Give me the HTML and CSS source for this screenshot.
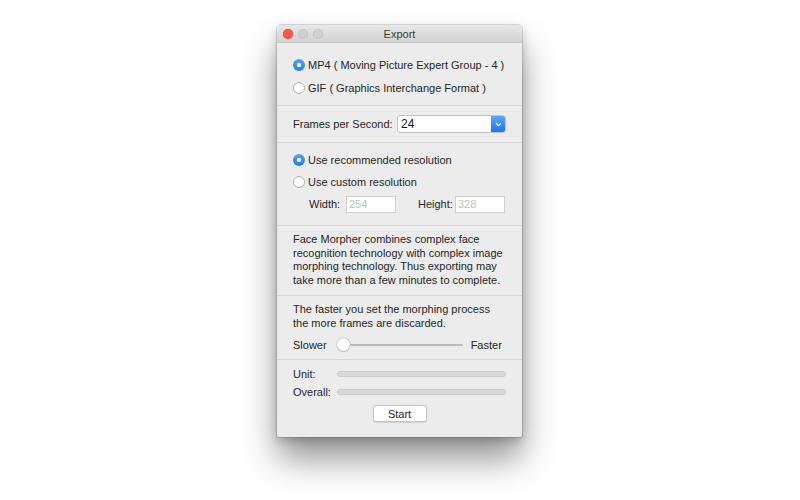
FILE: index.html
```html
<!DOCTYPE html>
<html>
<head>
<meta charset="utf-8">
<title>Export</title>
<link rel="stylesheet" href="styles.css">
</head>
<body>
<div class="window">
  <div class="titlebar">
    <div class="lights">
      <span class="light close"></span>
      <span class="light"></span>
      <span class="light"></span>
    </div>
    <div class="title">Export</div>
  </div>

  <div class="section format">
    <label class="radio-row"><span class="radio on"></span>MP4 ( Moving Picture Expert Group - 4 )</label>
    <label class="radio-row"><span class="radio"></span>GIF ( Graphics Interchange Format )</label>
  </div>

  <div class="section fps">
    <span class="fps-label">Frames per Second:</span>
    <div class="select">
      <span class="select-value">24</span>
      <span class="select-btn">
        <svg width="7" height="5" viewBox="0 0 7 5"><path d="M1 1.2 L3.5 3.6 L6 1.2" fill="none" stroke="#fff" stroke-width="1.2"/></svg>
      </span>
    </div>
  </div>

  <div class="section resolution">
    <label class="radio-row"><span class="radio on"></span>Use recommended resolution</label>
    <label class="radio-row"><span class="radio"></span>Use custom resolution</label>
    <div class="size-row">
      <span class="size-label">Width:</span>
      <span class="field">254</span>
      <span class="size-label height">Height:</span>
      <span class="field">328</span>
    </div>
  </div>

  <div class="section note">
    <p>Face Morpher combines complex face recognition technology with complex image morphing technology. Thus exporting may take more than a few minutes to complete.</p>
  </div>

  <div class="section speed">
    <p>The faster you set the morphing process<br>the more frames are discarded.</p>
    <div class="slider-row">
      <span>Slower</span>
      <div class="slider">
        <span class="track"></span>
        <span class="thumb"></span>
      </div>
      <span>Faster</span>
    </div>
  </div>

  <div class="section progress">
    <div class="progress-row">
      <span class="progress-label">Unit:</span>
      <span class="bar"></span>
    </div>
    <div class="progress-row">
      <span class="progress-label">Overall:</span>
      <span class="bar"></span>
    </div>
    <div class="actions">
      <button class="btn">Start</button>
    </div>
  </div>
</div>
</body>
</html>
```

FILE: styles.css
```css
html, body {
  margin: 0;
  padding: 0;
  background: #ffffff;
}

body {
  min-height: 100vh;
  padding-top: 25px;
  box-sizing: border-box;
  font-family: "Liberation Sans", Arial, sans-serif;
  font-size: 11px;
  color: #262626;
}

.window {
  width: 245px;
  margin: 0 0 0 277px;
  background: #ececec;
  border-radius: 4px 4px 2px 2px;
  box-shadow: 0 0 0 1px rgba(0, 0, 0, 0.12), 0 4px 10px rgba(0, 0, 0, 0.18), 0 22px 34px rgba(0, 0, 0, 0.42);
  overflow: hidden;
}

/* title bar */
.titlebar {
  position: relative;
  height: 17px;
  background: linear-gradient(#e8e8e8, #d3d3d3);
  border-bottom: 1px solid #c4c4c4;
  display: flex;
  align-items: center;
  justify-content: center;
}

.lights {
  position: absolute;
  left: 6px;
  top: 4px;
  display: flex;
  gap: 5px;
}

.light {
  width: 10px;
  height: 10px;
  border-radius: 50%;
  background: #d0d0d0;
  box-shadow: inset 0 0 0 0.5px #bdbdbd;
}

.light.close {
  background: #fc5753;
  box-shadow: inset 0 0 0 0.5px #df3d37;
}

.title {
  font-size: 11px;
  color: #3a3a3a;
}

/* sections */
.section {
  border-bottom: 1px solid #d6d6d6;
  padding: 0 16px;
}

.section:last-child {
  border-bottom: none;
}

.radio-row {
  display: flex;
  align-items: center;
  gap: 3px;
  height: 22px;
}

.radio {
  width: 12px;
  height: 12px;
  box-sizing: border-box;
  border-radius: 50%;
  background: #ffffff;
  border: 1px solid #b4b4b4;
  flex: none;
}

.radio.on {
  border: none;
  background: radial-gradient(circle, #ffffff 0 2px, transparent 2.4px), linear-gradient(#4fa3fb, #1a7ef5);
}

.format {
  padding-top: 10px;
  padding-bottom: 6px;
}

.format .radio-row {
  height: 23px;
}

/* frames per second */
.fps {
  display: flex;
  align-items: center;
  height: 36px;
}

.fps-label {
  width: 104px;
}

.select {
  width: 109px;
  height: 18px;
  box-sizing: border-box;
  background: #ffffff;
  border: 1px solid #c3c3c3;
  border-radius: 3px;
  display: flex;
  align-items: center;
  overflow: hidden;
}

.select-value {
  flex: 1;
  padding-left: 3px;
  font-size: 12px;
  color: #111;
}

.select-btn {
  width: 15px;
  height: 18px;
  margin-right: -1px;
  background: linear-gradient(#5fa9fa, #1a74f0);
  display: flex;
  align-items: center;
  justify-content: center;
}

/* resolution */
.resolution {
  padding-top: 6px;
  padding-bottom: 10px;
}

.size-row {
  display: flex;
  align-items: center;
  height: 22px;
  padding-left: 16px;
}

.size-label {
  width: 37px;
}

.size-label.height {
  width: 37px;
  margin-left: 22px;
}

.field {
  width: 50px;
  height: 17px;
  box-sizing: border-box;
  background: #ffffff;
  border: 1px solid #d0d0d0;
  color: #bdbdbd;
  padding-left: 2px;
  line-height: 15px;
}

/* note */
.note p,
.speed p {
  margin: 0;
  line-height: 13.7px;
}

.note {
  padding-top: 7px;
  padding-bottom: 7px;
}

/* speed slider */
.speed {
  padding-top: 7px;
  padding-bottom: 3px;
}

.slider-row {
  display: flex;
  align-items: center;
  height: 22px;
  margin-top: 4px;
}

.slider {
  position: relative;
  width: 126px;
  height: 14px;
  margin: 0 8px 0 10px;
}

.track {
  position: absolute;
  left: 4px;
  right: 0;
  top: 6px;
  height: 2px;
  background: #bcbcbc;
  border-radius: 1px;
}

.thumb {
  position: absolute;
  left: 0;
  top: 0;
  width: 13px;
  height: 13px;
  border-radius: 50%;
  background: #ffffff;
  box-shadow: 0 0 0 0.5px #b0b0b0, 0 1px 1px rgba(0, 0, 0, 0.2);
}

/* progress */
.progress {
  padding-top: 5px;
  padding-bottom: 15px;
}

.progress-row {
  display: flex;
  align-items: center;
  height: 18px;
}

.progress-label {
  width: 44px;
}

.bar {
  flex: 1;
  height: 4px;
  background: #d9d9d9;
  border: 1px solid #cacaca;
  border-radius: 3px;
}

.actions {
  display: flex;
  justify-content: center;
  margin-top: 4px;
}

.btn {
  width: 54px;
  height: 17px;
  padding: 0;
  background: #ffffff;
  border: 1px solid #c4c4c4;
  border-radius: 3px;
  font-family: inherit;
  font-size: 11px;
  color: #222;
  box-shadow: 0 0.5px 1px rgba(0, 0, 0, 0.12);
}
```
